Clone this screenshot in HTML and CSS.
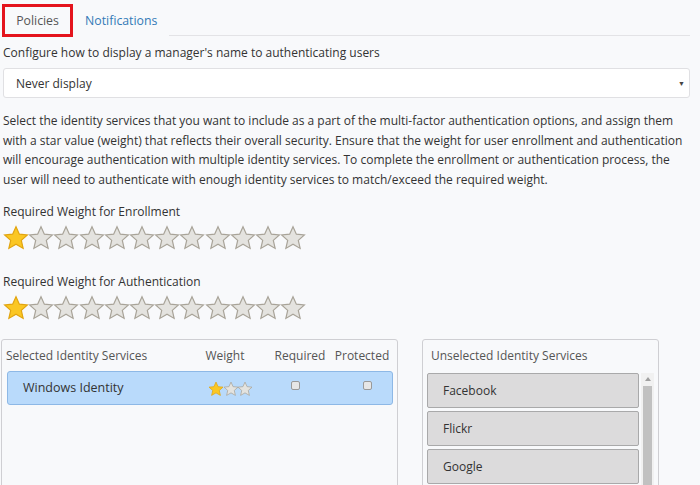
FILE: index.html
```html
<!DOCTYPE html>
<html lang="en">
<head>
  <meta charset="UTF-8" />
  <title>Policies</title>
  <link rel="stylesheet" href="styles.css">
</head>
<body>
  <svg width="0" height="0" class="defs">
    <defs>
      <symbol id="star" viewBox="0 0 24 24">
        <path d="M12 1.6l3.1 6.9 7.4.7-5.6 5 1.7 7.4L12 17.8l-6.6 3.8 1.7-7.4-5.6-5 7.4-.7z" />
      </symbol>
    </defs>
  </svg>

  <div class="tabs">
    <div class="tab active">Policies</div>
    <div class="tab">Notifications</div>
    <div class="tab-line"></div>
  </div>

  <div class="field-label">Configure how to display a manager's name to authenticating users</div>
  <div class="select">
    <span>Never display</span>
    <span class="caret">&#9660;</span>
  </div>

  <p class="intro">Select the identity services that you want to include as a part of the multi-factor authentication options, and assign them with a star value (weight) that reflects their overall security. Ensure that the weight for user enrollment and authentication will encourage authentication with multiple identity services. To complete the enrollment or authentication process, the user will need to authenticate with enough identity services to match/exceed the required weight.</p>

  <div class="weight-label">Required Weight for Enrollment</div>
  <div class="stars" data-count="12" data-on="1"></div>

  <div class="weight-label">Required Weight for Authentication</div>
  <div class="stars" data-count="12" data-on="1"></div>

  <div class="panels">
    <div class="panel selected-panel">
      <div class="grid-head">
        <span class="col-name">Selected Identity Services</span>
        <span class="col-weight">Weight</span>
        <span class="col-req">Required</span>
        <span class="col-prot">Protected</span>
      </div>
      <div class="service-row">
        <span class="col-name">Windows Identity</span>
        <span class="col-weight"><span class="stars small" data-count="3" data-on="1"></span></span>
        <span class="col-req"><span class="check"></span></span>
        <span class="col-prot"><span class="check"></span></span>
      </div>
    </div>

    <div class="panel unselected-panel">
      <div class="panel-title">Unselected Identity Services</div>
      <div class="list-wrap">
        <ul class="service-list">
          <li>Facebook</li>
          <li>Flickr</li>
          <li>Google</li>
        </ul>
        <div class="scrollbar">
          <span class="arrow"></span>
          <span class="thumb"></span>
        </div>
      </div>
    </div>
  </div>

  <script>
    document.querySelectorAll('.stars').forEach(el => {
      const count = +el.dataset.count;
      const on = +el.dataset.on;
      for (let i = 0; i < count; i++) {
        const svg = document.createElementNS('http://www.w3.org/2000/svg', 'svg');
        svg.setAttribute('class', i < on ? 'star on' : 'star');
        const use = document.createElementNS('http://www.w3.org/2000/svg', 'use');
        use.setAttribute('href', '#star');
        svg.appendChild(use);
        el.appendChild(svg);
      }
    });
  </script>
</body>
</html>
```

FILE: styles.css
```css
* {
  box-sizing: border-box;
  margin: 0;
  padding: 0;
}
body {
  font-family: "Open Sans", "Noto Sans", sans-serif;
  font-size: 12px;
  color: #333;
  background: #f8f9fb;
  width: 700px;
  height: 485px;
  overflow: hidden;
  padding: 0 10px 0 3px;
}
.defs {
  position: absolute;
}
.tabs {
  display: flex;
  align-items: stretch;
  height: 37px;
  padding-top: 4px;
}
.tab {
  padding: 0 12px;
  display: flex;
  align-items: center;
  font-size: 12.3px;
  color: #337ab7;
}
.tab.active {
  color: #555;
  border: 3px solid #e4141d;
  width: 71px;
  justify-content: center;
  margin-left: -1px;
}
.tab-line {
  flex: 1;
  border-bottom: 1px solid #e3e3e6;
  margin-bottom: 1px;
}
.field-label {
  margin-top: 7px;
  line-height: 17px;
}
.select {
  margin-top: 7px;
  height: 30px;
  background: #fff;
  border: 1px solid #e0e0e3;
  border-radius: 3px;
  display: flex;
  align-items: center;
  justify-content: space-between;
  padding: 0 4px 0 12px;
}
.caret {
  font-size: 7px;
  color: #444;
}
.intro {
  margin-top: 13px;
  line-height: 19.7px;
}
.weight-label {
  margin-top: 13px;
  line-height: 17px;
}
.stars {
  display: flex;
  margin-top: 5px;
  height: 26px;
}
.star {
  width: 26px;
  height: 26px;
  margin-right: -0.8px;
  fill: #e4e3df;
  stroke: #a8a398;
  stroke-width: 1.1;
}
.star.on {
  fill: #fbc723;
  stroke: #e1a40f;
}
.weight-label + .stars + .weight-label {
  margin-top: 22px;
}
.panels {
  display: flex;
  gap: 24px;
  margin-top: 18px;
  margin-left: -2px;
}
.panel {
  border: 1px solid #cfcfd3;
  border-radius: 3px;
  height: 160px;
}
.selected-panel {
  width: 397px;
  padding: 5px 4px 0 5px;
}
.grid-head, .service-row {
  display: grid;
  grid-template-columns: 198px 64px 62px 1fr;
  align-items: center;
}
.grid-head {
  height: 22px;
  color: #555;
}
.col-weight, .col-req, .col-prot {
  text-align: center;
}
.grid-head .col-weight {
  padding-right: 24px;
}
.grid-head .col-name {
  margin-left: -1px;
}
.service-row {
  height: 34px;
  background: #b9dafb;
  border: 1px solid #8db8e6;
  border-radius: 3px;
  margin-top: 4px;
  font-size: 12.5px;
}
.service-row .col-name {
  padding-left: 15px;
}
.service-row .col-weight {
  text-align: left;
  padding-left: 2px;
}
.stars.small {
  margin: 0;
  height: 16px;
  display: inline-flex;
  vertical-align: middle;
}
.stars.small .star {
  width: 16px;
  height: 16px;
  margin-right: -1.5px;
}
.check {
  display: inline-block;
  width: 9px;
  height: 9px;
  border: 1px solid #999;
  border-radius: 2px;
  background: #e6e6e6;
  margin-top: -6px;
  vertical-align: middle;
}
.service-row .col-req {
  padding-right: 12px;
}
.service-row .col-prot {
  padding-left: 10px;
}
.unselected-panel {
  width: 237px;
  padding: 6px 4px 0 4px;
}
.panel-title {
  color: #555;
  height: 22px;
  padding-left: 4px;
  line-height: 20px;
}
.list-wrap {
  display: flex;
  height: 135px;
  margin-top: 5px;
}
.service-list {
  list-style: none;
  width: 214px;
}
.service-list li {
  height: 35px;
  margin-bottom: 3px;
  background: #dcdbdc;
  border: 1px solid #a9a9aa;
  border-radius: 2px;
  display: flex;
  align-items: center;
  padding-left: 15px;
  font-size: 12px;
}
.scrollbar {
  width: 13px;
  margin-left: 2px;
  display: flex;
  flex-direction: column;
  align-items: center;
  background: #f1f1f1;
}
.arrow {
  margin-top: 4px;
  width: 0;
  height: 0;
  border-left: 3px solid transparent;
  border-right: 3px solid transparent;
  border-bottom: 4px solid #a0a0a0;
}
.thumb {
  margin-top: 5px;
  width: 9px;
  flex: 1;
  background: #c1c1c1;
}
```
